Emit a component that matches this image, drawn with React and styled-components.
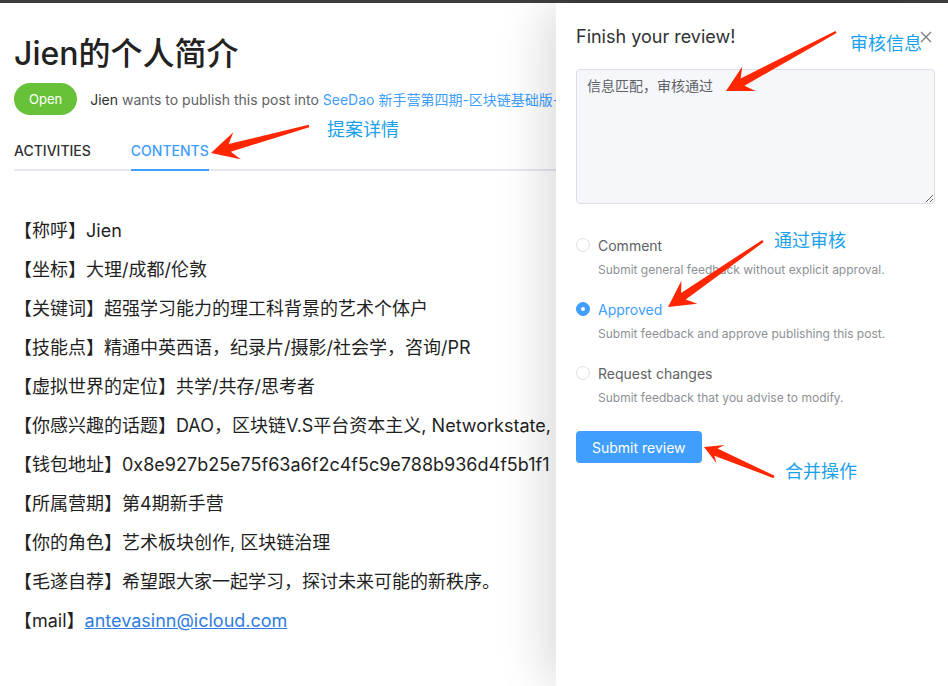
import React, { useState } from "react";
import styled, { createGlobalStyle } from "styled-components";

const GlobalStyle = createGlobalStyle`
  html, body {
    margin: 0;
    padding: 0;
    background: #fff;
  }
  body {
    font-family: Inter, "Noto Sans CJK SC", sans-serif;
    color: #303133;
    -webkit-font-smoothing: antialiased;
  }
`;

const Screen = styled.div`
  position: relative;
  height: 100vh;
  overflow: hidden;
  display: flex;
  flex-direction: column;
`;

const TopBar = styled.div`
  height: 3px;
  flex-shrink: 0;
  background: #3d3d3f;
`;

const Stage = styled.div`
  position: relative;
  flex: 1;
`;

const Post = styled.main`
  padding: 31px 0 0 14px;
`;

const Title = styled.h1`
  margin: 0;
  font-size: 32px;
  line-height: 40px;
  font-weight: 500;
  color: #222;
`;

const Meta = styled.div`
  display: flex;
  align-items: center;
  gap: 13px;
  margin-top: 9px;
  white-space: nowrap;
`;

const Badge = styled.span`
  display: inline-flex;
  align-items: center;
  height: 32px;
  padding: 0 15px;
  border-radius: 16px;
  background: #67c23a;
  color: #fff;
  font-size: 13px;
`;

const MetaText = styled.span`
  font-size: 14px;
  color: #606266;
`;

const Author = styled.span`
  color: #303133;
`;

const SpaceLink = styled.a`
  color: #409eff;
  text-decoration: none;
`;

const TabNav = styled.nav`
  display: flex;
  gap: 40px;
  height: 40px;
  box-sizing: border-box;
  margin-top: 16px;
  border-bottom: 2px solid #e4e7ed;
`;

const Tab = styled.div`
  display: flex;
  align-items: center;
  height: 40px;
  box-sizing: border-box;
  margin-bottom: -2px;
  border-bottom: 2px solid ${(p) => (p.$active ? "#409eff" : "transparent")};
  font-size: 14px;
  font-weight: 500;
  color: ${(p) => (p.$active ? "#409eff" : "#303133")};
  cursor: pointer;
`;

const Content = styled.div`
  margin-top: 40px;
`;

const Line = styled.p`
  margin: 0;
  font-size: 18px;
  line-height: 39px;
  color: #1f1f1f;
  white-space: nowrap;
`;

const Mail = styled.a`
  color: #2f7de1;
  text-decoration: underline;
`;

const Drawer = styled.aside`
  position: absolute;
  top: 0;
  right: 0;
  bottom: 0;
  width: 392px;
  box-sizing: border-box;
  padding: 21px 13px 0 20px;
  display: flex;
  flex-direction: column;
  background: #fff;
  box-shadow: -16px 0 44px -4px rgba(0, 0, 0, 0.14);
`;

const DrawerHeader = styled.div`
  display: flex;
  align-items: center;
  justify-content: space-between;
  height: 24px;
`;

const DrawerTitle = styled.span`
  font-size: 18px;
  color: #303133;
`;

const CloseButton = styled.button`
  display: flex;
  padding: 0;
  margin: 2px 3px 0 0;
  border: none;
  background: none;
  cursor: pointer;
`;

const ReviewText = styled.textarea`
  margin-top: 21px;
  width: 100%;
  height: 135px;
  box-sizing: border-box;
  padding: 5px 10px;
  border: 1px solid #dcdfe6;
  border-radius: 4px;
  background: #f5f7fa;
  font-family: inherit;
  font-size: 14px;
  line-height: 1.5;
  color: #606266;
  resize: vertical;
  outline: none;
`;

const Options = styled.div`
  display: flex;
  flex-direction: column;
  gap: 20px;
  margin-top: 31px;
`;

const Option = styled.label`
  display: flex;
  flex-direction: column;
  cursor: pointer;
`;

const OptionRow = styled.span`
  display: flex;
  align-items: center;
  gap: 8px;
  height: 20px;
`;

const Radio = styled.span`
  position: relative;
  width: 14px;
  height: 14px;
  box-sizing: border-box;
  border-radius: 50%;
  border: 1px solid ${(p) => (p.$checked ? "#409eff" : "#dcdfe6")};
  background: ${(p) => (p.$checked ? "#409eff" : "#fff")};

  &::after {
    content: "";
    position: absolute;
    left: 50%;
    top: 50%;
    width: 4px;
    height: 4px;
    border-radius: 50%;
    background: #fff;
    transform: translate(-50%, -50%);
    display: ${(p) => (p.$checked ? "block" : "none")};
  }
`;

const OptionLabel = styled.span`
  font-size: 14px;
  color: ${(p) => (p.$checked ? "#409eff" : "#606266")};
`;

const OptionDesc = styled.span`
  margin: 6px 0 0 22px;
  font-size: 12px;
  line-height: 18px;
  color: #8d9095;
`;

const SubmitButton = styled.button`
  align-self: flex-start;
  margin-top: 24px;
  height: 32px;
  padding: 0 16px;
  border: none;
  border-radius: 4px;
  background: #409eff;
  color: #fff;
  font-family: inherit;
  font-size: 14px;
  cursor: pointer;
`;

const Overlay = styled.svg`
  position: absolute;
  top: 0;
  left: 0;
  width: 100%;
  height: 100%;
  pointer-events: none;
`;

const Note = styled.span`
  position: absolute;
  left: ${(p) => p.$x}px;
  top: ${(p) => p.$y}px;
  font-size: 18px;
  line-height: 18px;
  color: #1ba1ec;
  white-space: nowrap;
  pointer-events: none;
`;

const lines = [
  "【称呼】Jien",
  "【坐标】大理/成都/伦敦",
  "【关键词】超强学习能力的理工科背景的艺术个体户",
  "【技能点】精通中英西语，纪录片/摄影/社会学，咨询/PR",
  "【虚拟世界的定位】共学/共存/思考者",
  "【你感兴趣的话题】DAO，区块链V.S平台资本主义, Networkstate, 数字游民",
  "【钱包地址】0x8e927b25e75f63a6f2c4f5c9e788b936d4f5b1f1",
  "【所属营期】第4期新手营",
  "【你的角色】艺术板块创作, 区块链治理",
  "【毛遂自荐】希望跟大家一起学习，探讨未来可能的新秩序。",
];

const reviewTypes = [
  { key: "comment", label: "Comment", desc: "Submit general feedback without explicit approval." },
  { key: "approved", label: "Approved", desc: "Submit feedback and approve publishing this post." },
  { key: "changes", label: "Request changes", desc: "Submit feedback that you advise to modify." },
];

// annotation arrows: tail -> tip, in page pixels
const arrows = [
  { tail: [309, 126], tip: [211, 153], head: 27, wide: 14 },
  { tail: [836, 32], tip: [726, 91], head: 26, wide: 14 },
  { tail: [763, 241], tip: [668, 307], head: 26, wide: 14 },
  { tail: [774, 477], tip: [704, 447], head: 18, wide: 10 },
];

const notes = [
  { text: "提案详情", x: 327, y: 121 },
  { text: "审核信息", x: 850, y: 35 },
  { text: "通过审核", x: 774, y: 232 },
  { text: "合并操作", x: 785, y: 463 },
];

function arrowPoints(tail, tip, headLen, headW) {
  const dx = tip[0] - tail[0];
  const dy = tip[1] - tail[1];
  const len = Math.hypot(dx, dy);
  const ux = dx / len;
  const uy = dy / len;
  const nx = -uy;
  const ny = ux;
  const neck = [tip[0] - ux * headLen * 0.72, tip[1] - uy * headLen * 0.72];
  const base = [tip[0] - ux * headLen, tip[1] - uy * headLen];
  const p = (pt, w) => `${(pt[0] + nx * w).toFixed(1)},${(pt[1] + ny * w).toFixed(1)}`;
  return [
    p(tail, 1.3),
    p(neck, 4),
    p(base, headW),
    `${tip[0]},${tip[1]}`,
    p(base, -headW),
    p(neck, -4),
    p(tail, -1.3),
  ].join(" ");
}

export default function App() {
  const [tab, setTab] = useState("contents");
  const [type, setType] = useState("approved");
  const [review, setReview] = useState("信息匹配，审核通过");

  return (
    <Screen>
      <GlobalStyle />
      <TopBar />
      <Stage>
        <Post>
          <Title>Jien的个人简介</Title>
          <Meta>
            <Badge>Open</Badge>
            <MetaText>
              <Author>Jien</Author> wants to publish this post into{" "}
              <SpaceLink href="#">SeeDao 新手营第四期-区块链基础版-学员简介</SpaceLink>
            </MetaText>
          </Meta>
          <TabNav>
            <Tab $active={tab === "activities"} onClick={() => setTab("activities")}>
              ACTIVITIES
            </Tab>
            <Tab $active={tab === "contents"} onClick={() => setTab("contents")}>
              CONTENTS
            </Tab>
          </TabNav>
          <Content>
            {lines.map((l) => (
              <Line key={l}>{l}</Line>
            ))}
            <Line>
              【mail】<Mail href="#">antevasinn@icloud.com</Mail>
            </Line>
          </Content>
        </Post>

        <Drawer>
          <DrawerHeader>
            <DrawerTitle>Finish your review!</DrawerTitle>
            <CloseButton aria-label="close">
              <svg width="12" height="12" viewBox="0 0 12 12">
                <path d="M1 1L11 11M11 1L1 11" stroke="#7a7a7a" strokeWidth="1.3" />
              </svg>
            </CloseButton>
          </DrawerHeader>
          <ReviewText value={review} onChange={(e) => setReview(e.target.value)} />
          <Options>
            {reviewTypes.map((r) => (
              <Option key={r.key} onClick={() => setType(r.key)}>
                <OptionRow>
                  <Radio $checked={type === r.key} />
                  <OptionLabel $checked={type === r.key}>{r.label}</OptionLabel>
                </OptionRow>
                <OptionDesc>{r.desc}</OptionDesc>
              </Option>
            ))}
          </Options>
          <SubmitButton>Submit review</SubmitButton>
        </Drawer>
      </Stage>

      <Overlay>
        {arrows.map((a, i) => (
          <polygon key={i} points={arrowPoints(a.tail, a.tip, a.head, a.wide)} fill="#ff2600" />
        ))}
      </Overlay>
      {notes.map((n) => (
        <Note key={n.text} $x={n.x} $y={n.y}>
          {n.text}
        </Note>
      ))}
    </Screen>
  );
}
